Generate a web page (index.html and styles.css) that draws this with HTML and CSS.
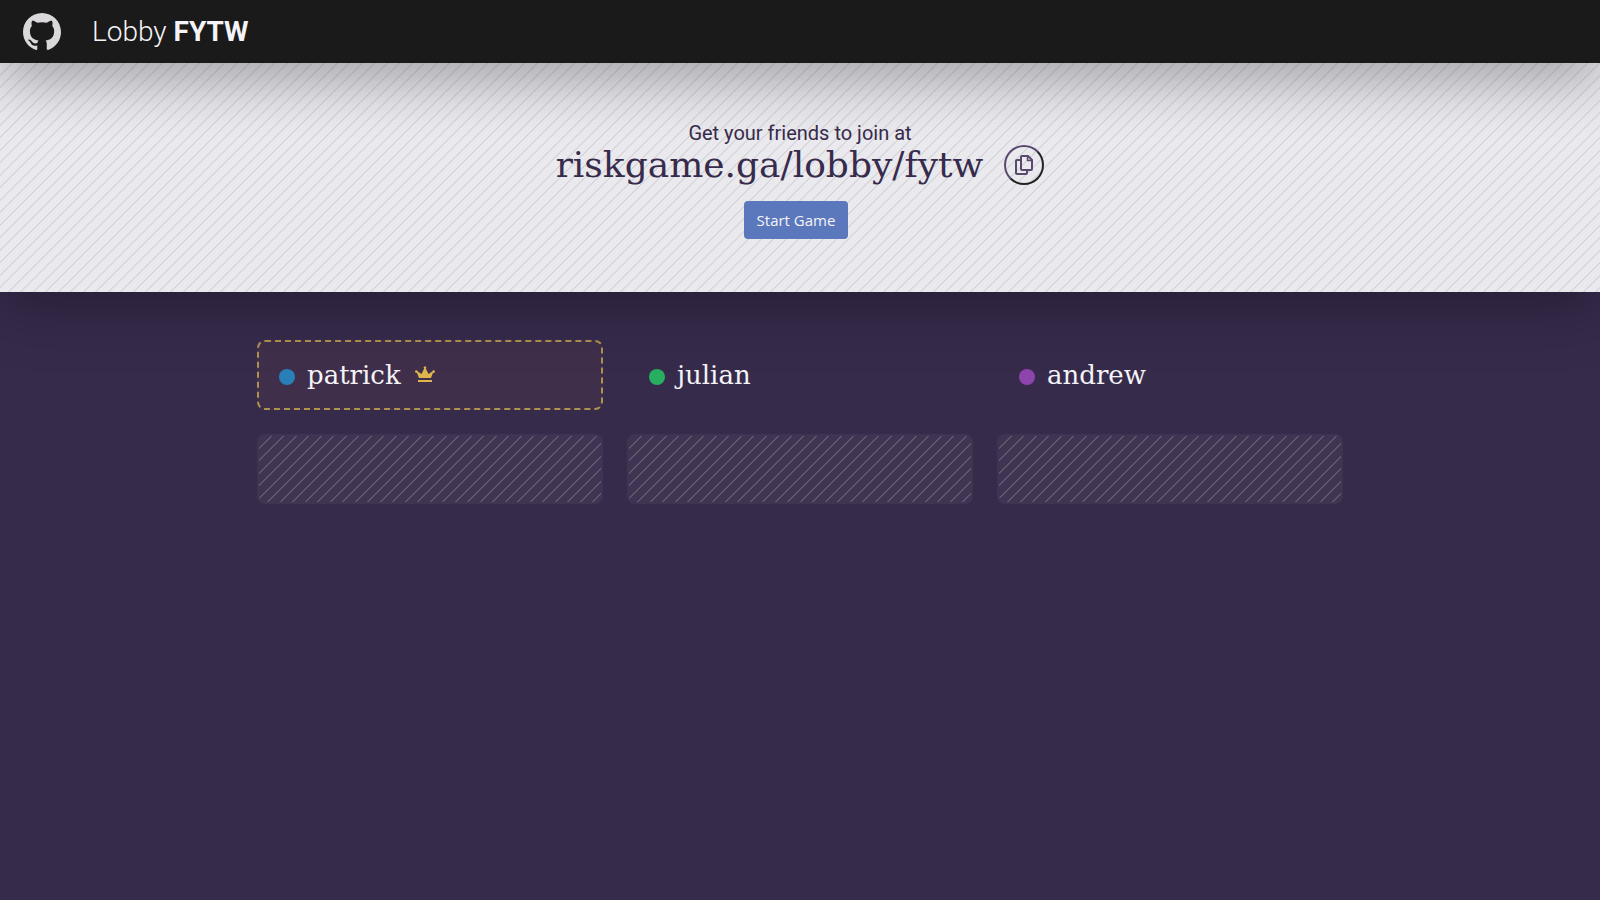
FILE: index.html
```html
<!DOCTYPE html>
<html lang="en">
<head>
<meta charset="utf-8">
<meta name="viewport" content="width=device-width, initial-scale=1">
<title>Lobby FYTW</title>
<link rel="stylesheet" href="styles.css">
</head>
<body>
<header class="topbar">
  <a class="repo" href="#" aria-label="GitHub">
    <svg viewBox="0 0 16 16" width="38" height="38" fill="currentColor" aria-hidden="true"><path d="M8 0C3.58 0 0 3.58 0 8c0 3.54 2.29 6.53 5.47 7.59.4.07.55-.17.55-.38 0-.19-.01-.82-.01-1.49-2.01.37-2.53-.49-2.69-.94-.09-.23-.48-.94-.82-1.13-.28-.15-.68-.52-.01-.53.63-.01 1.08.58 1.23.82.72 1.21 1.87.87 2.33.66.07-.52.28-.87.51-1.07-1.78-.2-3.64-.89-3.64-3.95 0-.87.31-1.59.82-2.15-.08-.2-.36-1.02.08-2.12 0 0 .67-.21 2.2.82.64-.18 1.32-.27 2-.27s1.36.09 2 .27c1.53-1.04 2.2-.82 2.2-.82.44 1.1.16 1.92.08 2.12.51.56.82 1.27.82 2.15 0 3.07-1.87 3.75-3.65 3.95.29.25.54.73.54 1.48 0 1.07-.01 1.93-.01 2.2 0 .21.15.46.55.38A8.01 8.01 0 0 0 16 8c0-4.42-3.58-8-8-8z"/></svg>
  </a>
  <h1 class="title">Lobby <strong>FYTW</strong></h1>
</header>
<section class="invite">
  <p class="hint">Get your friends to join at</p>
  <div class="link-row">
    <span class="link">riskgame.ga/lobby/fytw</span>
    <button class="copy" type="button" aria-label="Copy link">
      <svg viewBox="0 0 20 22" width="20" height="22" fill="none" stroke="currentColor" stroke-width="2" stroke-linejoin="round" aria-hidden="true"><path d="M7 6H3Q2 6 2 7V19Q2 20 3 20H12Q13 20 13 19V16"/><path d="M8 2H14L18 6V15Q18 16 17 16H8Q7 16 7 15V3Q7 2 8 2Z"/><path stroke-width="1.500" d="M13.500 2V6.500H18"/></svg>
    </button>
  </div>
  <button class="start" type="button">Start Game</button>
</section>
<main class="players">
  <div class="player owner"><span class="dot blue"></span><span class="name">patrick</span>
    <svg class="crown" viewBox="0 0 20 16" width="20" height="16" fill="currentColor" aria-label="Host"><path d="M4 12 2 6.800A1.300 1.300 0 1 1 2.700 5.600L6.500 8 9.200 2.600A1.300 1.300 0 1 1 10.800 2.600L13.500 8 17.300 5.600A1.300 1.300 0 1 1 18 6.800L16 12ZM3 14H17V16H3Z"/></svg>
  </div>
  <div class="player"><span class="dot green"></span><span class="name">julian</span></div>
  <div class="player"><span class="dot purple"></span><span class="name">andrew</span></div>
  <div class="player empty"></div>
  <div class="player empty"></div>
  <div class="player empty"></div>
</main>
</body>
</html>
```
FILE: styles.css
```css
* { box-sizing: border-box; }

body {
  margin: 0;
  min-height: 100vh;
  overflow-x: hidden;
  background: #372b4c;
  color: #f5f3f7;
  font-family: Roboto, sans-serif;
}

.topbar {
  position: relative;
  z-index: 2;
  display: flex;
  align-items: center;
  gap: 31px;
  height: 63px;
  padding: 0 23px;
  background: #1a1a1a;
  box-shadow: 0 16px 56px rgba(0, 0, 0, 0.32);
}

.repo {
  display: flex;
  color: #dad8da;
}

.title {
  margin: 0;
  font-size: 28px;
  font-weight: 300;
}

.title strong { font-weight: 700; }

.invite,
.empty {
  --stripes: linear-gradient(135deg,
    var(--line) 2%, transparent 2%, transparent 23%,
    var(--line) 23%, var(--line) 27%, transparent 27%, transparent 48%,
    var(--line) 48%, var(--line) 52%, transparent 52%, transparent 73%,
    var(--line) 73%, var(--line) 77%, transparent 77%, transparent 98%,
    var(--line) 98%);
}

.invite {
  --line: #d8d7dc;
  position: relative;
  z-index: 1;
  display: flex;
  flex-direction: column;
  align-items: center;
  padding: 58px 16px 53px;
  color: #372b4c;
  background: var(--stripes) 0 0 / 25px 25px, #eae9ee;
  box-shadow: 0 16px 56px rgba(0, 0, 0, 0.3);
}

.hint {
  margin: 0;
  font-size: 20px;
  line-height: 24px;
}

.link-row {
  display: flex;
  align-items: center;
  gap: 21px;
}

.link {
  font-family: "Roboto Slab", "DejaVu Serif", serif;
  font-size: 36px;
  line-height: 40px;
}

.copy {
  display: flex;
  align-items: center;
  justify-content: center;
  width: 40px;
  height: 40px;
  padding: 0;
  border: 2px solid;
  border-color: #59496f #222 #222 #59496f;
  border-radius: 50%;
  background: transparent;
  color: #59496f;
}

.start {
  margin: 16px 8px 0 0;
  padding: 0 13px;
  border: 0;
  border-radius: 4px;
  background: #5b78bc;
  color: #f5f3f7;
  font: 15px/38px "Open Sans", sans-serif;
}

.players {
  display: grid;
  grid-template-columns: repeat(3, 1fr);
  gap: 24px;
  max-width: 1118px;
  margin: 0 auto;
  padding: 48px 16px;
}

.player {
  display: flex;
  align-items: center;
  height: 70px;
  padding: 0 20px;
  border: 2px solid transparent;
  border-radius: 8px;
}

.owner {
  border: 2px dashed #b0924f;
  background: #3f2f4b;
}

.empty {
  --line: #62566f;
  background: var(--stripes) 0 0 / 25px 25px padding-box, #403453 border-box;
}

.dot {
  width: 16px;
  height: 16px;
  margin: 4px 12px 0 0;
  border-radius: 50%;
}

.blue { background: #2980b9; }
.green { background: #27ae60; }
.purple { background: #8e44ad; }

.name {
  font-family: "Roboto Slab", "DejaVu Serif", serif;
  font-size: 26px;
  line-height: 32px;
}

.crown {
  margin: 0 0 2px 14px;
  color: #dfb44c;
}
```
